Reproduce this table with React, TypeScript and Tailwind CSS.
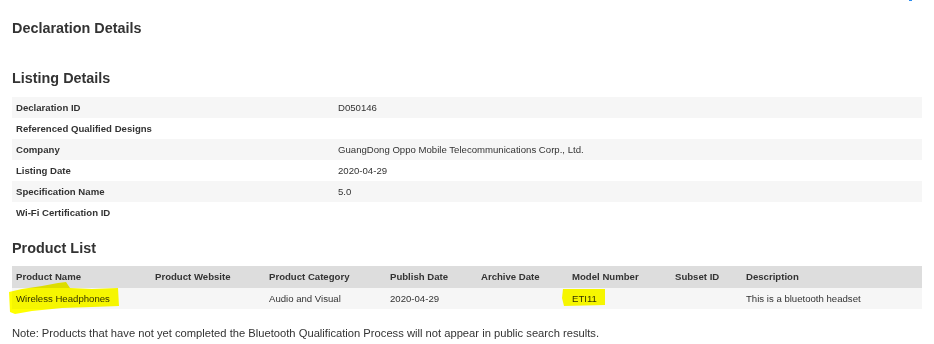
import React from "react";

const listing: [string, string][] = [
  ["Declaration ID", "D050146"],
  ["Referenced Qualified Designs", ""],
  ["Company", "GuangDong Oppo Mobile Telecommunications Corp., Ltd."],
  ["Listing Date", "2020-04-29"],
  ["Specification Name", "5.0"],
  ["Wi-Fi Certification ID", ""],
];

const headers = [
  "Product Name",
  "Product Website",
  "Product Category",
  "Publish Date",
  "Archive Date",
  "Model Number",
  "Subset ID",
  "Description",
];

const product = [
  "Wireless Headphones",
  "",
  "Audio and Visual",
  "2020-04-29",
  "",
  "ETI11",
  "",
  "This is a bluetooth headset",
];

const cols = "grid grid-cols-[139px_114px_121px_91px_91px_103px_71px_1fr]";

export default function App() {
  return (
    <div
      className="relative w-[934px] h-[344px] bg-white text-[#333333] px-[12px] overflow-hidden"
      style={{ fontFamily: '"Liberation Sans", Arial, sans-serif' }}
    >
      {/* edge of a toolbar icon peeking in at the top */}
      <div className="absolute left-[909px] top-0 w-[3px] h-[1px] bg-[#2a8cf0]" />

      <h2 className="pt-[18px] text-[14.4px] leading-[20px] font-bold">Declaration Details</h2>

      <h2 className="mt-[30px] text-[14.4px] leading-[20px] font-bold">Listing Details</h2>

      <div className="mt-[9px] w-[910px] text-[9.6px]">
        {listing.map(([label, value], i) => (
          <div
            key={label}
            className={`grid grid-cols-[322px_1fr] h-[21px] pt-[1px] items-center ${
              i % 2 === 0 ? "bg-[#f6f6f6]" : "bg-white"
            }`}
          >
            <div className="px-[4px] font-bold">{label}</div>
            <div className="px-[4px]">{value}</div>
          </div>
        ))}
      </div>

      <h2 className="mt-[15px] text-[14.4px] leading-[20px] font-bold">Product List</h2>

      <div className="relative mt-[8px] w-[910px] text-[9.6px]">
        <div className={`${cols} h-[22px] pt-[1px] items-center bg-[#dddddd] font-bold`}>
          {headers.map((h) => (
            <div key={h} className="px-[4px]">
              {h}
            </div>
          ))}
        </div>
        <div className={`${cols} h-[21px] pt-[1px] items-center bg-[#f6f6f6]`}>
          {product.map((v, i) => (
            <div key={i} className="px-[4px]">
              {v}
            </div>
          ))}
        </div>

        {/* marker highlights over the name and model number */}
        <svg
          className="absolute left-0 top-0 pointer-events-none mix-blend-multiply overflow-visible"
          width="910"
          height="50"
          viewBox="0 0 910 50"
        >
          <path
            d="M-3 26 L10 23 L30 20 L46 17 L54 16 L58 22 L80 23 L106 22 L107 40 L80 41 L50 42 L20 45 L3 48 L-2 46 Z"
            fill="#ffff00"
          />
          <path d="M551 23 L593 23 L593 39 L552 40 L550 32 Z" fill="#ffff00" />
        </svg>
      </div>

      <p className="mt-[16px] text-[11.2px] leading-[16px]">
        Note: Products that have not yet completed the Bluetooth Qualification Process will not appear in
        public search results.
      </p>
    </div>
  );
}
